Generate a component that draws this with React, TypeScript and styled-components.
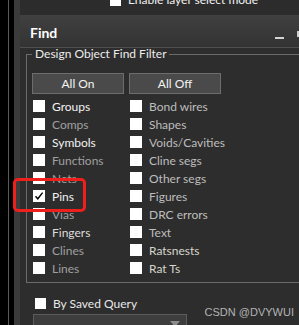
import React from 'react'
import styled, { createGlobalStyle } from 'styled-components'

const GlobalStyle = createGlobalStyle`
  html, body {
    margin: 0;
    padding: 0;
    background: #000;
  }
  body {
    font-family: Lato, "Noto Sans", sans-serif;
    font-size: 12px;
  }
`

const Screen = styled.div`
  position: relative;
  width: 299px;
  height: 325px;
  display: flex;
  overflow: hidden;
  background: #000;
`

const Rail = styled.div<{ $w: number; $bg: string }>`
  flex: none;
  width: ${p => p.$w}px;
  background: ${p => p.$bg};
`

const Panel = styled.div`
  flex: 1;
  min-width: 0;
  display: flex;
  flex-direction: column;
  background: #2d2d2d;
  overflow: hidden;
`

const TopStrip = styled.div`
  height: 15px;
  flex: none;
  display: flex;
  align-items: flex-start;
  gap: 7px;
  padding-left: 90px;
  background: #2c2c2c;
  color: #f0f0f0;
  overflow: hidden;
`

const TopBox = styled.div`
  width: 11px;
  height: 11px;
  margin-top: -5px;
  background: #fff;
`

const TopLabel = styled.span`
  line-height: 12px;
  margin-top: -6px;
  white-space: nowrap;
`

const Header = styled.div`
  height: 32px;
  flex: none;
  display: flex;
  align-items: center;
  padding-left: 10px;
  background: linear-gradient(#404040, #333333);
  border-bottom: 1px solid #4f4f4f;
`

const Title = styled.span`
  font-size: 14px;
  font-weight: 700;
  color: #fff;
  margin-top: 2px;
`

const MinBar = styled.div`
  width: 9px;
  height: 2px;
  margin: 14px 13px 0 auto;
  background: #d4d4d4;
`

const EdgeIcon = styled.div`
  width: 2px;
  height: 6px;
  margin-top: 6px;
  background: #cfcfcf;
`

const Body = styled.div`
  padding-left: 6px;
`

const Filter = styled.fieldset`
  margin: 0;
  width: 290px;
  box-sizing: border-box;
  padding: 0 0 5px 5px;
  border: 1px solid #6b6b6b;
  border-right: none;
`

const Legend = styled.legend`
  padding: 0 2px 0 3px;
  line-height: 12px;
  color: #ececec;
  white-space: nowrap;
`

const ButtonRow = styled.div`
  display: grid;
  grid-template-columns: 92px 92px;
  gap: 5px;
  margin-top: 13px;
`

const Button = styled.div`
  height: 21px;
  box-sizing: border-box;
  display: flex;
  align-items: center;
  justify-content: center;
  background: #4a4a4a;
  border: 1px solid #6d6d6d;
  color: #f4f4f4;
`

const CheckGrid = styled.div`
  display: grid;
  grid-template-columns: 97px 97px;
  grid-auto-flow: column;
  grid-template-rows: repeat(10, 18px);
  margin-top: 3px;
  padding-left: 1px;
`

const CheckRow = styled.div<{ $tone: string }>`
  display: flex;
  align-items: center;
  gap: 7px;
  color: ${p => p.$tone};
  white-space: nowrap;
`

const Box = styled.div<{ $size?: number }>`
  flex: none;
  width: ${p => p.$size ?? 12}px;
  height: ${p => p.$size ?? 12}px;
  background: #fff;
  display: flex;
  align-items: center;
  justify-content: center;
`

const QueryRow = styled.div`
  display: flex;
  align-items: center;
  gap: 7px;
  height: 18px;
  margin-top: 11px;
  padding-left: 9px;
  color: #e8e8e8;
`

const Dropdown = styled.div`
  width: 154px;
  height: 22px;
  box-sizing: border-box;
  margin: 2px 0 0 7px;
  display: flex;
  justify-content: flex-end;
  padding: 6px 6px 0 0;
  background: #3d3d3d;
  border: 1px solid #5c5c5c;
`

const Arrow = styled.div`
  width: 0;
  height: 0;
  border-left: 5px solid transparent;
  border-right: 5px solid transparent;
  border-top: 6px solid #8c8c8c;
`

const Highlight = styled.div`
  position: absolute;
  left: 13px;
  top: 178px;
  width: 73px;
  height: 34px;
  box-sizing: border-box;
  border: 3px solid #ef1f1b;
  border-radius: 5px;
`

const Watermark = styled.div`
  position: absolute;
  right: 5px;
  top: 306px;
  font-family: "Liberation Sans", Arial, sans-serif;
  font-size: 11px;
  color: #b4b4b4;
`

const BRIGHT = '#f2f2f2'
const DIM = '#a0a0a0'
const MID = '#bdbdbd'

const items: { label: string; tone: string; checked?: boolean }[] = [
  { label: 'Groups', tone: BRIGHT },
  { label: 'Comps', tone: DIM },
  { label: 'Symbols', tone: BRIGHT },
  { label: 'Functions', tone: DIM },
  { label: 'Nets', tone: DIM },
  { label: 'Pins', tone: BRIGHT, checked: true },
  { label: 'Vias', tone: DIM },
  { label: 'Fingers', tone: '#dcdcdc' },
  { label: 'Clines', tone: DIM },
  { label: 'Lines', tone: DIM },
  { label: 'Bond wires', tone: MID },
  { label: 'Shapes', tone: MID },
  { label: 'Voids/Cavities', tone: MID },
  { label: 'Cline segs', tone: MID },
  { label: 'Other segs', tone: MID },
  { label: 'Figures', tone: MID },
  { label: 'DRC errors', tone: MID },
  { label: 'Text', tone: MID },
  { label: 'Ratsnests', tone: '#d6d6cc' },
  { label: 'Rat Ts', tone: '#d6d6cc' },
]

const Tick = () => (
  <svg width="12" height="12" viewBox="0 0 12 12">
    <path d="M2.5 6.2 L4.8 8.8 L9.6 2.6" fill="none" stroke="#000" strokeWidth="1.4" />
  </svg>
)

export default function App() {
  return (
    <>
      <GlobalStyle />
      <Screen>
        <Rail $w={8} $bg="#000" />
        <Rail $w={1} $bg="#5a5a5a" />
        <Rail $w={5} $bg="#000" />
        <Rail $w={6} $bg="#3b3b3b" />
        <Panel>
          <TopStrip>
            <TopBox />
            <TopLabel>Enable layer select mode</TopLabel>
          </TopStrip>
          <Header>
            <Title>Find</Title>
            <MinBar />
            <EdgeIcon />
          </Header>
          <Body>
            <Filter>
              <Legend>Design Object Find Filter</Legend>
              <ButtonRow>
                <Button>All On</Button>
                <Button>All Off</Button>
              </ButtonRow>
              <CheckGrid>
                {items.map(it => (
                  <CheckRow key={it.label} $tone={it.tone}>
                    <Box>{it.checked && <Tick />}</Box>
                    {it.label}
                  </CheckRow>
                ))}
              </CheckGrid>
            </Filter>
            <QueryRow>
              <Box $size={11} />
              By Saved Query
            </QueryRow>
            <Dropdown>
              <Arrow />
            </Dropdown>
          </Body>
        </Panel>
        <Highlight />
        <Watermark>CSDN @DVYWUI</Watermark>
      </Screen>
    </>
  )
}
